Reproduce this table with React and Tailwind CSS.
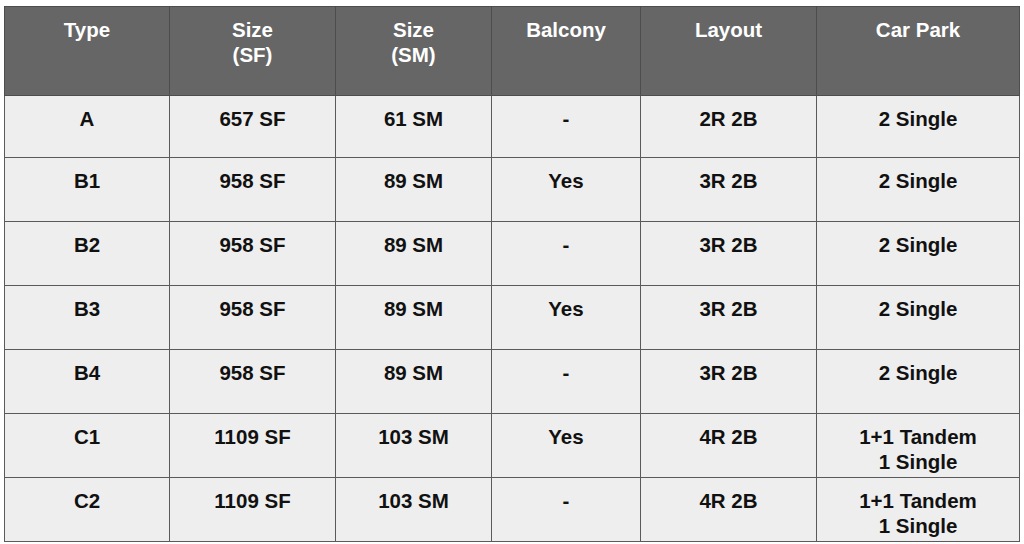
const HEAD = [['Type'], ['Size', '(SF)'], ['Size', '(SM)'], ['Balcony'], ['Layout'], ['Car Park']]

const ROWS = [
  ['A', '657 SF', '61 SM', '-', '2R 2B', ['2 Single']],
  ['B1', '958 SF', '89 SM', 'Yes', '3R 2B', ['2 Single']],
  ['B2', '958 SF', '89 SM', '-', '3R 2B', ['2 Single']],
  ['B3', '958 SF', '89 SM', 'Yes', '3R 2B', ['2 Single']],
  ['B4', '958 SF', '89 SM', '-', '3R 2B', ['2 Single']],
  ['C1', '1109 SF', '103 SM', 'Yes', '4R 2B', ['1+1 Tandem', '1 Single']],
  ['C2', '1109 SF', '103 SM', '-', '4R 2B', ['1+1 Tandem', '1 Single']],
]

const WIDTHS = [165, 166, 156, 149, 176, 203]

export default function App() {
  return (
    <div className="w-[1024px] h-[544px] bg-white overflow-hidden pt-[6px] pl-[4px]" style={{ fontFamily: '"Liberation Sans", Arial, sans-serif' }}>
      <table className="table-fixed border-collapse w-[1015px] text-[20.5px] leading-[25px] font-bold text-center">
        <colgroup>
          {WIDTHS.map((w, i) => <col key={i} style={{ width: w }} />)}
        </colgroup>
        <thead>
          <tr className="h-[89px] bg-[#666666] text-white">
            {HEAD.map((lines, i) => (
              <th key={i} className="border border-[#4d4d4d] align-top pt-[10px] font-bold">
                {lines.map((l) => <div key={l}>{l}</div>)}
              </th>
            ))}
          </tr>
        </thead>
        <tbody>
          {ROWS.map((row, r) => (
            <tr key={row[0]} className={r === 0 ? 'h-[62px] bg-[#eeeeee]' : 'h-[64px] bg-[#eeeeee]'}>
              {row.map((cell, i) => (
                <td key={i} className="border border-[#5a5a5a] align-top pt-[10px] text-[#111111]">
                  {Array.isArray(cell) ? cell.map((l) => <div key={l}>{l}</div>) : cell}
                </td>
              ))}
            </tr>
          ))}
        </tbody>
      </table>
    </div>
  )
}
